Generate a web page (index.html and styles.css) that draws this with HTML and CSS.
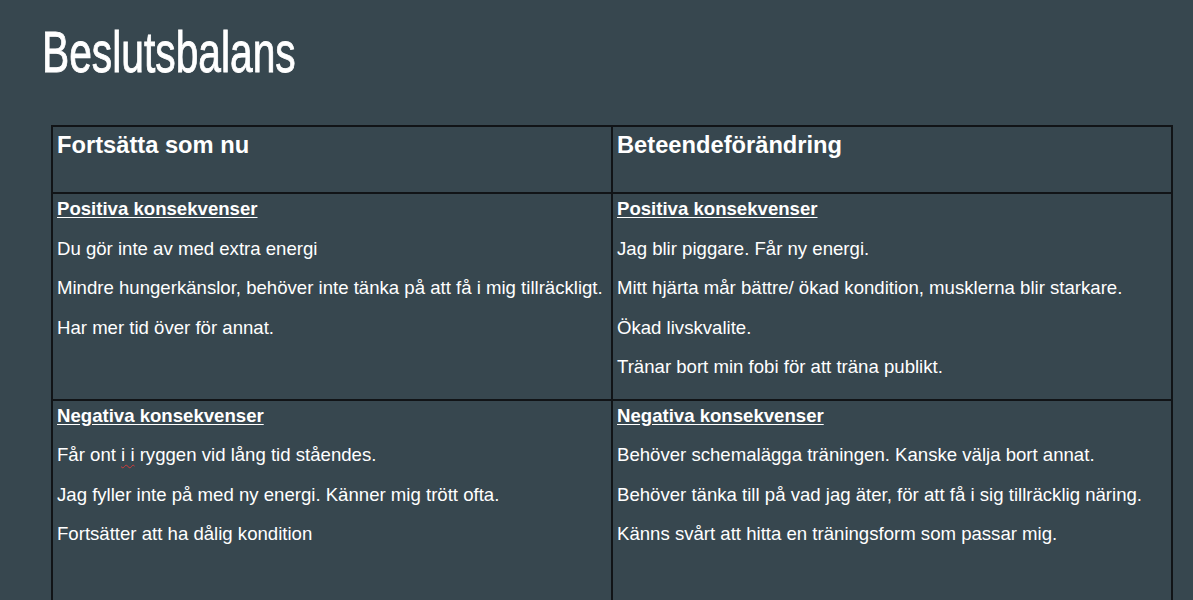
FILE: index.html
```html
<!DOCTYPE html>
<html lang="sv">
<head>
<meta charset="utf-8">
<title>Beslutsbalans</title>
<link rel="stylesheet" href="styles.css">
</head>
<body>
<div class="page">
  <h1 class="title"><span class="title-text">Beslutsbalans</span></h1>
  <table class="balance">
    <colgroup><col class="col"><col class="col"></colgroup>
    <tr class="head-row">
      <td><p class="col-title">Fortsätta som nu</p></td>
      <td><p class="col-title">Beteendeförändring</p></td>
    </tr>
    <tr>
      <td>
        <p class="sub">Positiva konsekvenser</p>
        <p>Du gör inte av med extra energi</p>
        <p>Mindre hungerkänslor, behöver inte tänka på att få i mig tillräckligt.</p>
        <p>Har mer tid över för annat.</p>
      </td>
      <td>
        <p class="sub">Positiva konsekvenser</p>
        <p>Jag blir piggare. Får ny energi.</p>
        <p>Mitt hjärta mår bättre/ ökad kondition, musklerna blir starkare.</p>
        <p>Ökad livskvalite.</p>
        <p>Tränar bort min fobi för att träna publikt.</p>
      </td>
    </tr>
    <tr>
      <td>
        <p class="sub">Negativa konsekvenser</p>
        <p>Får ont <span class="spell">i i</span> ryggen vid lång tid ståendes.</p>
        <p>Jag fyller inte på med ny energi. Känner mig trött ofta.</p>
        <p>Fortsätter att ha dålig kondition</p>
        <p class="blank">&nbsp;</p>
      </td>
      <td>
        <p class="sub">Negativa konsekvenser</p>
        <p>Behöver schemalägga träningen. Kanske välja bort annat.</p>
        <p>Behöver tänka till på vad jag äter, för att få i sig tillräcklig näring.</p>
        <p>Känns svårt att hitta en träningsform som passar mig.</p>
        <p class="blank">&nbsp;</p>
      </td>
    </tr>
  </table>
</div>
</body>
</html>
```

FILE: styles.css
```css
html, body {
  margin: 0;
  padding: 0;
  background: #37474f;
}

body {
  color: #ffffff;
  font-family: "Liberation Sans", Arial, sans-serif;
  overflow: hidden;
}

.page {
  padding: 0 0 40px 0;
}

.title {
  margin: 24px 0 0 42px;
  height: 57px;
  font-size: 57px;
  line-height: 57px;
  font-weight: normal;
}

.title-text {
  display: inline-block;
  transform: scaleX(0.715);
  transform-origin: left center;
  -webkit-text-stroke: 0.9px #ffffff;
  white-space: nowrap;
}

.balance {
  margin: 44px 0 0 51px;
  width: 1122px;
  border-collapse: collapse;
  table-layout: fixed;
  border: 2px solid #111417;
}

.col {
  width: 50%;
}

.balance td {
  border: 2px solid #111417;
  vertical-align: top;
  padding: 3px 4px 4px 4px;
  font-size: 18.6px;
  line-height: 23.5px;
}

.balance p {
  margin: 0 0 16px 0;
  white-space: nowrap;
}

.head-row td {
  padding: 7px 4px 35px 4px;
}

.balance .col-title {
  margin: 0;
  font-size: 23.7px;
  line-height: 23px;
  font-weight: bold;
}

.sub {
  font-weight: bold;
  text-decoration: underline;
  text-underline-offset: 2px;
}

.spell {
  text-decoration: underline wavy #d23a3a;
  text-decoration-thickness: 1px;
  text-underline-offset: 3px;
}

.blank {
  height: 60px;
}
```
